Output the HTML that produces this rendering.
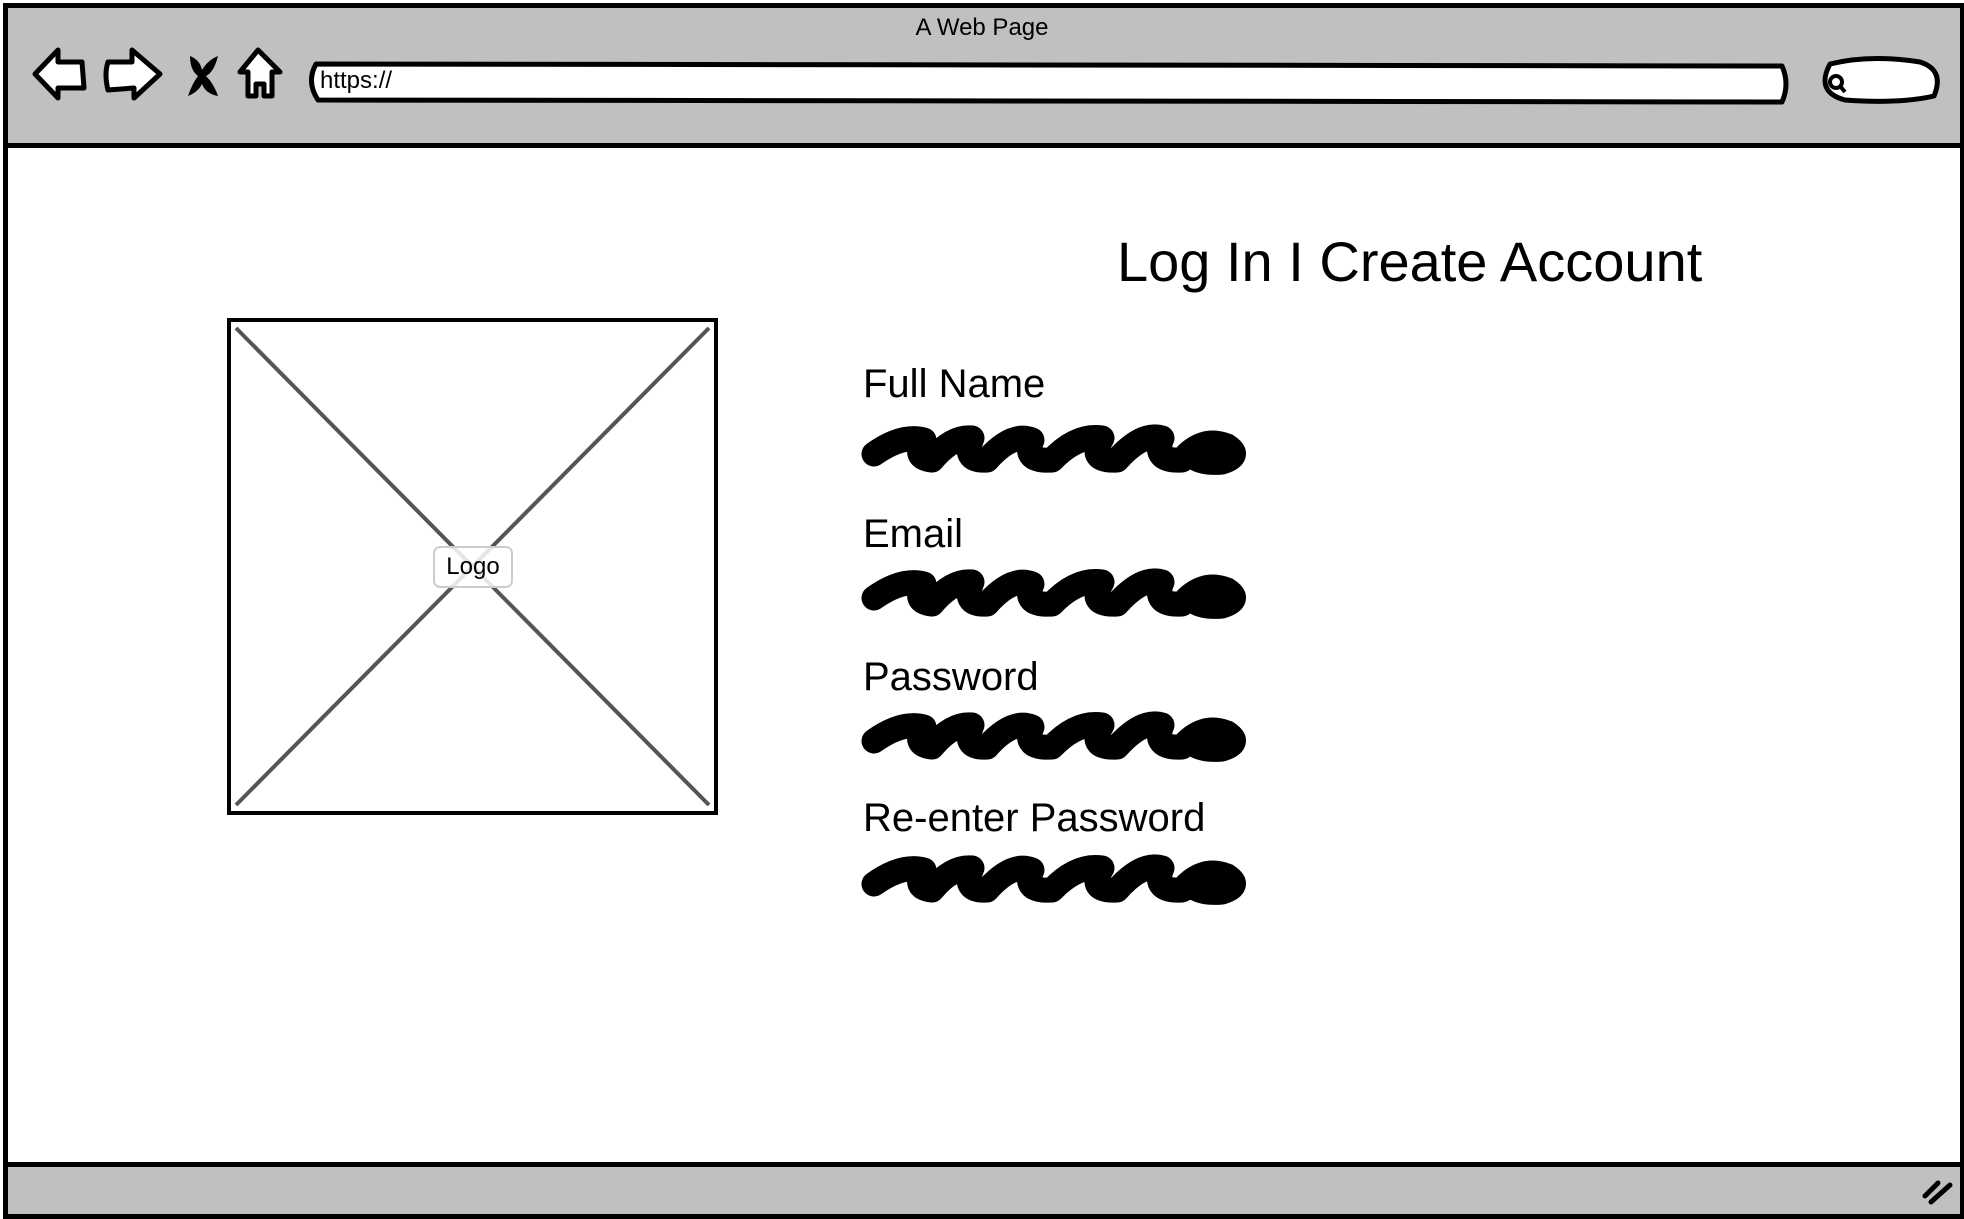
<!DOCTYPE html>
<html><head><meta charset="utf-8"><style>
html,body{margin:0;padding:0;background:#fff;}
body{width:1964px;height:1218px;position:relative;overflow:hidden;font-family:"Liberation Sans",sans-serif;color:#000;}
.abs{position:absolute;}
.lbl{position:absolute;left:863px;font-size:40px;line-height:1;}
</style></head><body>
<div class="abs" style="left:3px;top:3px;width:1952px;height:1206px;border:5px solid #000;"></div>
<div class="abs" style="left:8px;top:8px;width:1952px;height:135px;background:#c0c0c0;border-bottom:5px solid #000;"></div>
<div class="abs" style="left:8px;top:1162px;width:1952px;height:47px;background:#c0c0c0;border-top:5px solid #000;"></div>
<div class="abs" style="left:0;top:14px;width:1964px;text-align:center;font-size:24px;">A Web Page</div>
<svg class="abs" style="left:0;top:0" width="1964" height="1218">
<g stroke="#000" stroke-width="5" fill="#fff" stroke-linejoin="round">
<path d="M35,74 L58,50 L58,62 L82,62 L84,88 L58,88 L58,98 Z"/>
<path d="M108,62 L132,62 L132,50 L160,74 L134,98 L134,88 L108,90 Q104,74 108,62 Z"/>
<path d="M258,50 L240,72 L248,72 L248,96 L256,96 L256,84 L264,84 L264,96 L272,96 L272,72 L280,72 Z"/>
<path d="M316,64 L1782,66 Q1790,84 1782,102 L318,100 Q306,82 316,64 Z"/>
<path d="M1830,64 Q1870,54 1920,62 Q1945,70 1934,96 Q1900,104 1845,100 Q1815,92 1830,64 Z"/>
</g>
<path d="M190,56 Q200,60 202,70 Q208,60 218,56 Q214,72 206,76 Q214,84 218,96 Q206,94 202,84 Q198,92 188,96 Q192,84 198,76 Q190,70 190,56 Z" fill="#000"/>
<circle cx="1836" cy="82" r="6" stroke="#000" stroke-width="4" fill="none"/>
<line x1="1840" y1="86" x2="1845" y2="92" stroke="#000" stroke-width="4"/>
<g stroke="#000" stroke-width="5" stroke-linecap="round"><line x1="1925" y1="1196" x2="1938" y2="1183"/><line x1="1931" y1="1202" x2="1950" y2="1185"/></g>
<rect x="229" y="320" width="487" height="493" fill="none" stroke="#000" stroke-width="4"/>
<g stroke="#555" stroke-width="4"><line x1="236" y1="328" x2="709" y2="805"/><line x1="709" y1="328" x2="236" y2="805"/></g>
<defs><path id="s" d="M12,38 Q40,18 62,24 Q50,42 70,44 Q90,20 110,22 Q100,46 125,44 Q150,16 170,24 Q160,46 190,44 Q215,18 240,22 Q225,46 255,44 Q280,16 300,22 Q290,46 320,44 Q340,20 365,30 Q380,40 360,46 Q340,48 330,40" fill="none" stroke="#000" stroke-width="25" stroke-linecap="round" stroke-linejoin="round"/></defs>
<use href="#s" x="862" y="416"/>
<use href="#s" x="862" y="560"/>
<use href="#s" x="862" y="703"/>
<use href="#s" x="862" y="846"/>
</svg>
<div class="abs" style="left:433px;top:546px;width:76px;height:38px;border:2px solid #ccc;border-radius:7px;background:rgba(255,255,255,0.85);font-size:24px;text-align:center;line-height:38px;">Logo</div>
<div class="abs" style="left:1117px;top:234px;font-size:56px;line-height:1;white-space:nowrap;">Log In I Create Account</div>
<div class="lbl" style="top:364px;">Full Name</div>
<div class="lbl" style="top:514px;">Email</div>
<div class="lbl" style="top:657px;">Password</div>
<div class="lbl" style="top:798px;">Re-enter Password</div>
<div class="abs" style="left:320px;top:67px;font-size:24px;">https://</div>
</body></html>
